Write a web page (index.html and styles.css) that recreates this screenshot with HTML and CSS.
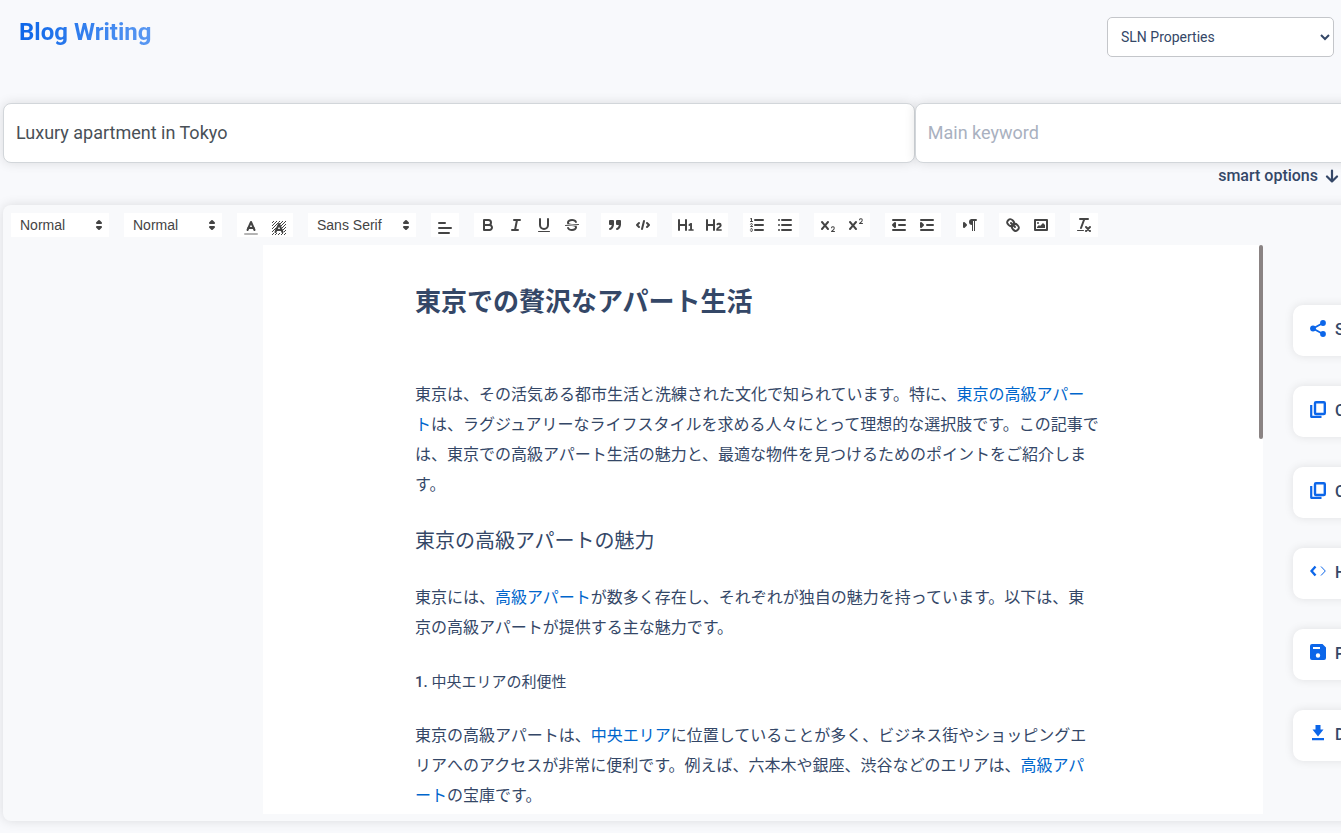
FILE: index.html
```html
<!DOCTYPE html>
<html lang="en">
<head>
<meta charset="utf-8">
<meta name="viewport" content="width=device-width, initial-scale=1">
<title>Blog Writing</title>
<link rel="stylesheet" href="styles.css">
</head>
<body>
<header class="topbar">
  <h1 class="brand">Blog Writing</h1>
  <select class="property" aria-label="Property">
    <option>SLN Properties</option>
  </select>
</header>

<main class="workspace">
  <div class="fields">
    <input class="field" type="text" aria-label="Title" value="Luxury apartment in Tokyo">
    <input class="field" type="text" aria-label="Main keyword" placeholder="Main keyword">
  </div>

  <div class="options">
    <button class="options-toggle" type="button">smart options
      <svg width="14" height="14" viewBox="0 0 14 14"><path d="M7 1.500v11M2 7.500l5 5 5-5" fill="none" stroke="currentColor" stroke-width="2.200" stroke-linecap="round" stroke-linejoin="round"/></svg>
    </button>
  </div>

  <section class="editor">
    <div class="toolbar" role="toolbar" aria-label="Formatting">
      <span class="group picker">
        <select aria-label="Heading"><option>Normal</option></select>
        <svg viewBox="0 0 18 18"><polygon class="both" points="7 11 9 13 11 11 7 11"/><polygon class="both" points="7 7 9 5 11 7 7 7"/></svg>
      </span>
      <span class="group picker">
        <select aria-label="Size"><option>Normal</option></select>
        <svg viewBox="0 0 18 18"><polygon class="both" points="7 11 9 13 11 11 7 11"/><polygon class="both" points="7 7 9 5 11 7 7 7"/></svg>
      </span>
      <span class="group low">
        <button type="button" aria-label="Text colour"><svg viewBox="0 0 18 18"><line class="s faded" x1="3" x2="15" y1="15" y2="15"/><polyline class="s" points="5.5 11 9 3 12.5 11"/><line class="s" x1="11.63" x2="6.38" y1="9" y2="9"/></svg></button>
        <button type="button" aria-label="Background colour"><svg viewBox="0 0 18 18"><defs><pattern id="hatch" width="3" height="3" patternUnits="userSpaceOnUse"><path d="M0 2h1v1H0zM1 1h1v1H1zM2 0h1v1H2z" fill="#444"/></pattern></defs><path d="M2 2h14v14H2zM9 3L4 14h10z" fill="url(#hatch)" fill-rule="evenodd"/><polyline class="s" points="5.5 13 9 5 12.5 13"/><line class="s" x1="11.63" x2="6.38" y1="11" y2="11"/></svg></button>
      </span>
      <span class="group picker wide">
        <select aria-label="Font"><option>Sans Serif</option></select>
        <svg viewBox="0 0 18 18"><polygon class="both" points="7 11 9 13 11 11 7 11"/><polygon class="both" points="7 7 9 5 11 7 7 7"/></svg>
      </span>
      <span class="group low">
        <button type="button" aria-label="Align"><svg viewBox="0 0 18 18"><path class="s" d="M3 9h12M3 14h10M3 4h6"/></svg></button>
      </span>
      <span class="group">
        <button type="button" aria-label="Bold"><svg viewBox="0 0 18 18"><path class="s" d="M5,4H9.500A2.500,2.500,0,0,1,12,6.500v0A2.500,2.500,0,0,1,9.500,9H5V4Z"/><path class="s" d="M5,9h5.500A2.500,2.500,0,0,1,13,11.500v0A2.500,2.500,0,0,1,10.500,14H5V9Z"/></svg></button>
        <button type="button" aria-label="Italic"><svg viewBox="0 0 18 18"><path class="s" d="M7 4h6M5 14h6M8 14L10 4"/></svg></button>
        <button type="button" aria-label="Underline"><svg viewBox="0 0 18 18"><path class="s" d="M5,3V9a4.012,4.012,0,0,0,4,4H9a4.012,4.012,0,0,0,4-4V3"/><rect class="f" height="1" rx="0.5" width="12" x="3" y="15"/></svg></button>
        <button type="button" aria-label="Strike"><svg viewBox="0 0 18 18"><line class="s thin" x1="15.5" x2="2.5" y1="8.5" y2="9.5"/><path class="f" d="M9.007,8C6.542,7.791,6,7.519,6,6.500,6,5.792,7.283,5,9,5c1.571,0,2.765.679,2.969,1.309a1,1,0,0,0,1.900-.617C13.356,4.106,11.354,3,9,3,6.200,3,4,4.538,4,6.500a3.200,3.200,0,0,0,.5,1.843Z"/><path class="f" d="M8.984,10C11.457,10.208,12,10.479,12,11.500c0,0.708-1.283,1.500-3,1.500-1.571,0-2.765-.679-2.969-1.309a1,1,0,1,0-1.900.617C4.644,13.894,6.646,15,9,15c2.800,0,5-1.538,5-3.500a3.200,3.200,0,0,0-.5-1.843Z"/></svg></button>
      </span>
      <span class="group">
        <button type="button" aria-label="Quote"><svg viewBox="0 0 18 18"><rect class="both" height="3" width="3" x="4" y="5"/><rect class="both" height="3" width="3" x="11" y="5"/><path class="both" d="M7,8c0,4.031-3,5-3,5"/><path class="both" d="M14,8c0,4.031-3,5-3,5"/></svg></button>
        <button type="button" aria-label="Code"><svg viewBox="0 0 18 18"><path class="s" d="M5 7L3 9l2 2M13 7l2 2-2 2M10 5L8 13"/></svg></button>
      </span>
      <span class="group">
        <button type="button" aria-label="Heading 1"><svg viewBox="0 0 18 18"><path class="f" d="M10,4V14a1,1,0,0,1-2,0V10H3v4a1,1,0,0,1-2,0V4A1,1,0,0,1,3,4V8H8V4a1,1,0,0,1,2,0Zm6.068,9.209H14.990V7.599a.541.541,0,0,0-.605-.605h-.627a1.011,1.011,0,0,0-.748.297L11.645,8.566a.543.543,0,0,0-.022.858l.286.308a.539.539,0,0,0,.847.033l.099-.088a1.214,1.214,0,0,0,.242-.353h.022s-.011.309-.011.605V13.209H12.041a.541.541,0,0,0-.605.605v.439a.541.541,0,0,0,.605.605h4.027a.541.541,0,0,0,.605-.605v-.439A.541.541,0,0,0,16.068,13.209Z"/></svg></button>
        <button type="button" aria-label="Heading 2"><svg viewBox="0 0 18 18"><path class="f" d="M16.740,13.814v.439a.541.541,0,0,1-.605.605H11.855a.584.584,0,0,1-.649-.605V14.013c0-2.905,3.399-3.422,3.399-4.555a.777.777,0,0,0-.847-.781,1.177,1.177,0,0,0-.836.385c-.275.264-.561.374-.858.132l-.429-.341c-.308-.242-.385-.518-.154-.814a2.972,2.972,0,0,1,2.454-1.177,2.454,2.454,0,0,1,2.684,2.409c0,2.453-3.179,2.927-3.278,3.938h2.794A.541.541,0,0,1,16.740,13.814ZM9,3A1,1,0,0,0,8,4V8H3V4A1,1,0,0,0,1,4V14a1,1,0,0,0,2,0V10H8v4a1,1,0,0,0,2,0V4A1,1,0,0,0,9,3Z"/></svg></button>
      </span>
      <span class="group">
        <button type="button" aria-label="Numbered list"><svg viewBox="0 0 18 18"><path class="s" d="M7 4h8M7 9h8M7 14h8"/><path class="s thin" d="M2.500 5.500h2M4.500,10.500h-2c0-.234,1.850-1.076,1.850-2.234A0.959,0.959,0,0,0,2.500,8.156M2.500,14.846a0.959,0.959,0,0,0,1.850-.109A0.700,0.700,0,0,0,3.750,14a0.688,0.688,0,0,0,.6-0.736,0.959,0.959,0,0,0-1.850-.109"/><path class="f" d="M3.500,6A0.500,0.500,0,0,1,3,5.500V3.085l-0.276.138A0.500,0.500,0,0,1,2.053,3c-0.124-.247-0.023-0.324.224-0.447l1-.5A0.500,0.500,0,0,1,4,2.500v3A0.500,0.500,0,0,1,3.500,6Z"/></svg></button>
        <button type="button" aria-label="Bullet list"><svg viewBox="0 0 18 18"><path class="s" d="M6 4h9M6 9h9M6 14h9M3 4h0M3 9h0M3 14h0"/></svg></button>
      </span>
      <span class="group">
        <button type="button" aria-label="Subscript"><svg viewBox="0 0 18 18"><path class="f" d="M15.500,15H13.861a3.858,3.858,0,0,0,1.914-2.975,1.800,1.800,0,0,0-1.600-1.751A1.921,1.921,0,0,0,12.021,11.700a0.500,0.500,0,1,0,.957.291h0a0.914,0.914,0,0,1,1.053-.725,0.810,0.810,0,0,1,.744.762c0,1.076-1.170,1.870-1.940,2.431A1.456,1.456,0,0,0,12,15.500a0.500,0.500,0,0,0,.5.5h3A0.500,0.500,0,0,0,15.500,15Z"/><path class="f" d="M9.650,5.241a1,1,0,0,0-1.409.108L6,7.964,3.759,5.349A1,1,0,0,0,2.192,6.592Q2.215,6.621,2.241,6.649L4.684,9.500,2.241,12.350A1,1,0,0,0,3.710,13.707q0.026-.028.049-0.057L6,11.036,8.241,13.650a1,1,0,1,0,1.567-1.243Q9.785,12.378,9.759,12.350L7.316,9.500,9.759,6.651A1,1,0,0,0,9.650,5.241Z"/></svg></button>
        <button type="button" aria-label="Superscript"><svg viewBox="0 0 18 18"><path class="f" d="M15.500,7H13.861a4.015,4.015,0,0,0,1.914-2.975,1.800,1.800,0,0,0-1.600-1.751A1.922,1.922,0,0,0,12.021,3.700a0.500,0.500,0,1,0,.957.291,0.917,0.917,0,0,1,1.053-.725,0.810,0.810,0,0,1,.744.762c0,1.077-1.164,1.925-1.934,2.486A1.423,1.423,0,0,0,12,7.500a0.500,0.500,0,0,0,.5.5h3A0.500,0.500,0,0,0,15.500,7Z"/><path class="f" d="M9.650,5.241a1,1,0,0,0-1.409.108L6,7.964,3.759,5.349A1,1,0,0,0,2.192,6.592Q2.215,6.621,2.241,6.649L4.684,9.500,2.241,12.350A1,1,0,0,0,3.710,13.707q0.026-.028.049-0.057L6,11.036,8.241,13.650a1,1,0,1,0,1.567-1.243Q9.785,12.378,9.759,12.350L7.316,9.500,9.759,6.651A1,1,0,0,0,9.650,5.241Z"/></svg></button>
      </span>
      <span class="group">
        <button type="button" aria-label="Outdent"><svg viewBox="0 0 18 18"><path class="s" d="M3 14h12M3 4h12M9 9h6"/><polyline class="both" points="5 7 5 11 3 9 5 7"/></svg></button>
        <button type="button" aria-label="Indent"><svg viewBox="0 0 18 18"><path class="s" d="M3 14h12M3 4h12M9 9h6"/><polyline class="both" points="3 7 3 11 5 9 3 7"/></svg></button>
      </span>
      <span class="group">
        <button type="button" aria-label="Direction"><svg viewBox="0 0 18 18"><polygon class="both" points="3 11 5 9 3 7 3 11"/><line class="s" x1="15" x2="11" y1="4" y2="4"/><path class="f" d="M11,3a3,3,0,0,0,0,6h1V3H11Z"/><rect class="f" height="11" width="1" x="11" y="4"/><rect class="f" height="11" width="1" x="13" y="4"/></svg></button>
      </span>
      <span class="group">
        <button type="button" aria-label="Link"><svg viewBox="0 0 18 18"><line class="s" x1="7" x2="11" y1="7" y2="11"/><path class="s" d="M8.900,4.577a3.476,3.476,0,0,1,.36,4.679A3.476,3.476,0,0,1,4.577,8.900C3.185,7.500,2.035,6.400,4.217,4.217S7.500,3.185,8.900,4.577Z"/><path class="s" d="M13.423,9.100a3.476,3.476,0,0,0-4.679-.36,3.476,3.476,0,0,0,.36,4.679c1.392,1.392,2.500,2.542,4.679.36S14.815,10.500,13.423,9.100Z"/></svg></button>
        <button type="button" aria-label="Image"><svg viewBox="0 0 18 18"><rect class="s" height="10" width="12" x="3" y="4"/><circle class="f" cx="6" cy="7" r="1"/><polyline class="f" points="5 12 5 11 7 9 8 10 11 7 13 9 13 12 5 12"/></svg></button>
      </span>
      <span class="group">
        <button type="button" aria-label="Clear formatting"><svg viewBox="0 0 18 18"><path class="s" d="M5 3h8M6 12L9.350 3M11 11l4 4M15 11l-4 4"/><rect class="f" height="1" rx="0.5" width="7" x="2" y="14"/></svg></button>
      </span>
    </div>

    <div class="stage">
      <article class="page" lang="ja">
        <h2 class="doc-title">東京での贅沢なアパート生活</h2>
        <p>東京は、その活気ある都市生活と洗練された文化で知られています。特に、<a href="#">東京の高級アパー<br>ト</a>は、ラグジュアリーなライフスタイルを求める人々にとって理想的な選択肢です。この記事で<br>は、東京での高級アパート生活の魅力と、最適な物件を見つけるためのポイントをご紹介しま<br>す。</p>
        <h3 class="doc-section">東京の高級アパートの魅力</h3>
        <p>東京には、<a href="#">高級アパート</a>が数多く存在し、それぞれが独自の魅力を持っています。以下は、東<br>京の高級アパートが提供する主な魅力です。</p>
        <h4 class="doc-point"><span class="number">1.</span> 中央エリアの利便性</h4>
        <p>東京の高級アパートは、<a href="#">中央エリア</a>に位置していることが多く、ビジネス街やショッピングエ<br>リアへのアクセスが非常に便利です。例えば、六本木や銀座、渋谷などのエリアは、<a href="#">高級アパ<br>ート</a>の宝庫です。</p>
        <span class="scroll-thumb"></span>
      </article>

      <div class="actions">
        <button type="button"><svg viewBox="0 0 16 17"><path d="M13 3L3 8.500l10 5.500" fill="none" stroke="currentColor" stroke-width="1.800"/><circle cx="13" cy="3" r="2.900" fill="currentColor"/><circle cx="3" cy="8.500" r="2.900" fill="currentColor"/><circle cx="13" cy="14" r="2.900" fill="currentColor"/></svg>Share</button>
        <button type="button"><svg viewBox="0 0 16 17"><rect x="5" y="1.200" width="9.800" height="11.800" rx="1" fill="none" stroke="currentColor" stroke-width="2.400"/><path d="M1.200 4v11.800h10.300" fill="none" stroke="currentColor" stroke-width="2.200" stroke-linejoin="round"/></svg>Copy</button>
        <button type="button"><svg viewBox="0 0 16 17"><rect x="5" y="1.200" width="9.800" height="11.800" rx="1" fill="none" stroke="currentColor" stroke-width="2.400"/><path d="M1.200 4v11.800h10.300" fill="none" stroke="currentColor" stroke-width="2.200" stroke-linejoin="round"/></svg>Copy</button>
        <button type="button"><svg viewBox="0 0 16 17"><path d="M5.500 3.500L1.500 8l4 4.500" fill="none" stroke="currentColor" stroke-width="2.400"/><path d="M11 3.500L15.300 8 11 12.500" fill="none" stroke="currentColor"/></svg>HTML</button>
        <button type="button"><svg viewBox="0 0 16 17"><path fill="currentColor" fill-rule="evenodd" d="M2 0h10.500L16 3.500V14a2 2 0 0 1-2 2H2a2 2 0 0 1-2-2V2a2 2 0 0 1 2-2zm1 3v2h7V3zM8 9.300a2.200 2.200 0 1 0 0 4.400 2.200 2.200 0 0 0 0-4.400z"/></svg>Publish</button>
        <button type="button"><svg viewBox="0 0 16 17"><path fill="currentColor" d="M5.500 0h5v4.500h3L8 11.500l-5.500-7h3zM2 13h12v2.200H2z"/></svg>Download</button>
      </div>
    </div>
  </section>
</main>
</body>
</html>
```
FILE: styles.css
```css
* {
  box-sizing: border-box;
}

body {
  margin: 0;
  min-height: 100vh;
  overflow: hidden;
  background: #f8f9fc;
  color: #344767;
  font-family: Roboto, "Noto Sans CJK JP", sans-serif;
  font-size: 16px;
}

button,
input,
select {
  font: inherit;
  color: inherit;
}

button {
  border: 0;
  background: none;
  cursor: pointer;
}

.topbar {
  display: flex;
  justify-content: space-between;
  align-items: flex-start;
  padding: 17px 7px 0 19px;
}

.brand {
  margin: 0;
  font-size: 24px;
  line-height: 30px;
  font-weight: 700;
  background: linear-gradient(90deg, #0c66e9, #5a98f2);
  background-clip: text;
  -webkit-background-clip: text;
  color: transparent;
}

.property {
  width: 227px;
  height: 40px;
  padding: 0 0 0 9px;
  border: 1px solid #c4c6ca;
  border-radius: 5px;
  background: #fff;
  font-size: 14px;
}

.workspace {
  padding: 46px 0 0 3px;
}

.fields {
  display: flex;
}

.field {
  flex: 0 0 calc(68% + 2px);
  height: 60px;
  padding: 0 12px 2px;
  border: 1px solid #d2d6da;
  border-radius: 8px;
  background: #fff;
  box-shadow: 0 0 12px rgba(0, 0, 0, 0.12);
  color: #495057;
  font-size: 18px;
}

.field::placeholder {
  color: #a9b1c0;
}

.options {
  display: flex;
  justify-content: flex-end;
  padding: 0 2px 0 0;
}

.options-toggle {
  display: flex;
  align-items: center;
  gap: 7px;
  padding: 0;
  font-weight: 500;
  line-height: 26px;
}

.editor {
  width: 110%;
  margin-top: 16px;
  padding: 8px 8px 7px;
  border-radius: 8px;
  background: #f8f9fb;
  box-shadow: 0 0 12px rgba(0, 0, 0, 0.12);
}

.toolbar {
  display: flex;
  gap: 15px;
  padding-bottom: 8px;
}

.group {
  display: flex;
  height: 24px;
  background: #fff;
}

.group button {
  width: 28px;
  height: 24px;
  padding: 3px 5px;
}

.group svg {
  display: block;
  width: 18px;
  height: 18px;
}

.low button {
  padding: 6px 5px 0;
}

.picker {
  display: grid;
  width: 98px;
  align-items: center;
}

.wide {
  width: 108px;
}

.picker select,
.picker svg {
  grid-area: 1 / 1;
}

.picker select {
  width: 100%;
  height: 24px;
  padding: 0 0 0 9px;
  border: 0;
  appearance: none;
  background: none;
  color: #444;
  font-family: "Liberation Sans", Arial, sans-serif;
  font-size: 14px;
  font-weight: 500;
}

.picker svg {
  justify-self: end;
  margin-right: 1px;
  pointer-events: none;
}

.s,
.both {
  fill: none;
  stroke: #444;
  stroke-width: 2;
  stroke-linecap: round;
  stroke-linejoin: round;
}

.both,
.f {
  fill: #444;
}

.thin {
  stroke-width: 1;
}

.faded {
  opacity: 0.4;
}

.stage {
  display: flex;
  align-items: flex-start;
  gap: 30px;
  padding-left: 252px;
}

.page {
  position: relative;
  flex: 0 0 1000px;
  padding: 37px 152px 3px;
  background: #fff;
  white-space: nowrap;
}

.page p {
  margin: 0;
  line-height: 30px;
}

.page a {
  color: #06c;
  text-decoration: none;
}

.doc-title {
  margin: 0 0 58px;
  font-size: 26px;
  line-height: 40px;
  font-weight: 600;
}

.doc-section {
  margin: 26px 0;
  font-size: 20px;
  line-height: 31px;
  font-weight: 400;
}

.doc-point {
  margin: 27px 0;
  font-size: 15px;
  line-height: 24px;
  font-weight: 400;
}

.number {
  font-weight: 500;
}

.scroll-thumb {
  position: absolute;
  top: 0;
  right: 0;
  width: 4px;
  height: 194px;
  border-radius: 2px;
  background: #8a8383;
}

.actions {
  display: flex;
  flex-direction: column;
  gap: 30px;
  padding-top: 60px;
}

.actions button {
  display: flex;
  align-items: center;
  gap: 9px;
  width: 150px;
  height: 51px;
  padding: 0 17px 2px;
  border-radius: 10px;
  background: #fff;
  box-shadow: 0 0 10px rgba(0, 0, 0, 0.1);
  font-weight: 500;
}

.actions svg {
  flex: none;
  width: 16px;
  height: 17px;
  margin-bottom: 2px;
  color: #0c66e9;
}
```
